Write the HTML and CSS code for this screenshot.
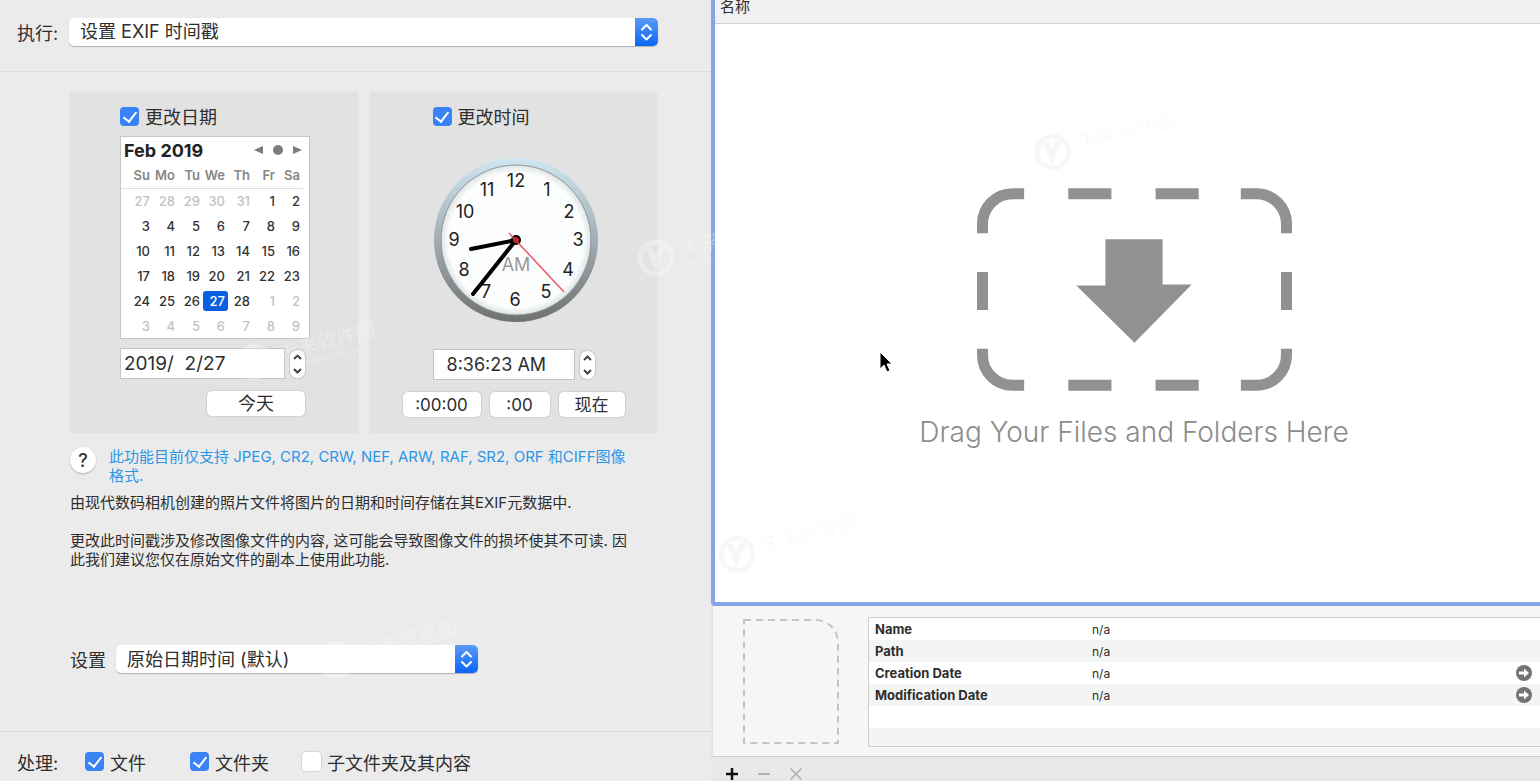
FILE: index.html
```html
<!DOCTYPE html>
<html lang="zh-CN">
<head>
  <meta charset="UTF-8">
  <meta name="viewport" content="width=device-width, initial-scale=1">
  <title>设置 EXIF 时间戳</title>
  <link rel="stylesheet" href="styles.css">
</head>
<body>
  <div class="container">
    <div class="settings">
      <div class="action-bar">
        <label for="action">执行:</label>
        <div class="select-box">
          <select id="action"><option>设置 EXIF 时间戳</option></select>
          <svg class="select-arrows" viewBox="0 0 23 28"><path d="M7 11.500l4.500-4.500 4.500 4.500M7 17l4.500 4.500 4.500-4.500"/></svg>
        </div>
      </div>

      <div class="settings-body">
        <div class="panels">
          <div class="panel date-panel">
            <label class="check"><input type="checkbox" checked>更改日期</label>
            <div class="calendar">
              <div class="calendar-head">
                <span class="month">Feb 2019</span>
                <button aria-label="Previous month"><svg width="9" height="10"><path d="M9 1v8L0 5z"/></svg></button>
                <button aria-label="Current month"><svg width="10" height="10"><circle cx="5" cy="5" r="5"/></svg></button>
                <button aria-label="Next month"><svg width="9" height="10"><path d="M0 1v8l9-4z"/></svg></button>
              </div>
              <table>
                <thead>
                  <tr><th>Su</th><th>Mo</th><th>Tu</th><th>We</th><th>Th</th><th>Fr</th><th>Sa</th></tr>
                </thead>
                <tbody>
                  <tr><td class="other">27</td><td class="other">28</td><td class="other">29</td><td class="other">30</td><td class="other">31</td><td>1</td><td>2</td></tr>
                  <tr><td>3</td><td>4</td><td>5</td><td>6</td><td>7</td><td>8</td><td>9</td></tr>
                  <tr><td>10</td><td>11</td><td>12</td><td>13</td><td>14</td><td>15</td><td>16</td></tr>
                  <tr><td>17</td><td>18</td><td>19</td><td>20</td><td>21</td><td>22</td><td>23</td></tr>
                  <tr><td>24</td><td>25</td><td>26</td><td class="selected"><span>27</span></td><td>28</td><td class="other">1</td><td class="other">2</td></tr>
                  <tr><td class="other">3</td><td class="other">4</td><td class="other">5</td><td class="other">6</td><td class="other">7</td><td class="other">8</td><td class="other">9</td></tr>
                </tbody>
              </table>
            </div>
            <div class="field">
              <input type="text" class="date-input" aria-label="日期" value="2019/  2/27">
              <div class="stepper">
                <button aria-label="Up"><svg width="9" height="6"><path d="M1 5l3.500-3.500L8 5"/></svg></button>
                <button aria-label="Down"><svg width="9" height="6"><path d="M1 1l3.500 3.500L8 1"/></svg></button>
              </div>
            </div>
            <div class="buttons">
              <button class="btn today">今天</button>
            </div>
          </div>

          <div class="panel time-panel">
            <label class="check"><input type="checkbox" checked>更改时间</label>
            <svg class="clock" viewBox="0 0 166 166">
              <defs>
                <linearGradient id="rim" x1="0" y1="0" x2="0" y2="1">
                  <stop offset="0" stop-color="#cfe6f0"/>
                  <stop offset=".5" stop-color="#a3aeb3"/>
                  <stop offset="1" stop-color="#707070"/>
                </linearGradient>
                <radialGradient id="face">
                  <stop offset=".9" stop-color="#fcfdfd"/>
                  <stop offset="1" stop-color="#dfe3e5"/>
                </radialGradient>
              </defs>
              <circle cx="83" cy="83" r="82" fill="url(#rim)"/>
              <circle cx="83" cy="83" r="75" fill="url(#face)" stroke="#8d9699"/>
              <g class="digits">
                <text x="83" y="30">12</text>
                <text x="114" y="39">1</text>
                <text x="136" y="61">2</text>
                <text x="145" y="89">3</text>
                <text x="135" y="119">4</text>
                <text x="113" y="141">5</text>
                <text x="82" y="149">6</text>
                <text x="53" y="141">7</text>
                <text x="31" y="119">8</text>
                <text x="21" y="89">9</text>
                <text x="32" y="61">10</text>
                <text x="54" y="39">11</text>
                <text x="83" y="114" class="ampm">AM</text>
              </g>
              <path class="hand" d="M83 83L38 92M83 83L40 137"/>
              <circle cx="83" cy="83" r="5"/>
              <path d="M76 76l55 59" stroke="#ee5560" stroke-width="1.500"/>
              <circle cx="83" cy="83" r="3" fill="#c3252f"/>
            </svg>
            <div class="field">
              <input type="text" class="time-input" aria-label="时间" value="8:36:23 AM">
              <div class="stepper">
                <button aria-label="Up"><svg width="9" height="6"><path d="M1 5l3.500-3.500L8 5"/></svg></button>
                <button aria-label="Down"><svg width="9" height="6"><path d="M1 1l3.500 3.500L8 1"/></svg></button>
              </div>
            </div>
            <div class="buttons">
              <button class="btn hour">:00:00</button>
              <button class="btn minute">:00</button>
              <button class="btn now">现在</button>
            </div>
          </div>
        </div>

        <div class="help">
          <button class="help-button">?</button>
          <p>此功能目前仅支持 JPEG, CR2, CRW, NEF, ARW, RAF, SR2, ORF 和CIFF图像<br>格式.</p>
        </div>
        <p class="note">由现代数码相机创建的照片文件将图片的日期和时间存储在其EXIF元数据中.</p>
        <p class="note">更改此时间戳涉及修改图像文件的内容, 这可能会导致图像文件的损坏使其不可读. 因<br>此我们建议您仅在原始文件的副本上使用此功能.</p>

        <div class="target">
          <label for="target">设置</label>
          <div class="select-box">
            <select id="target"><option>原始日期时间 (默认)</option></select>
            <svg class="select-arrows" viewBox="0 0 23 28"><path d="M7 11.500l4.500-4.500 4.500 4.500M7 17l4.500 4.500 4.500-4.500"/></svg>
          </div>
        </div>
      </div>

      <div class="process-bar">
        <span>处理:</span>
        <label class="check"><input type="checkbox" checked>文件</label>
        <label class="check"><input type="checkbox" checked>文件夹</label>
        <label class="check"><input type="checkbox">子文件夹及其内容</label>
      </div>
    </div>

    <div class="files">
      <div class="file-list">
        <div class="list-header">名称</div>
        <div class="drop-area">
          <svg class="drop-icon" viewBox="0 0 314 202">
            <g fill="none" stroke="#919191" stroke-width="11">
              <path d="M5.500 45V35.500A30 30 0 0 1 35.500 5.500H47M263 5.500h15.500a30 30 0 0 1 30 30V45M5.500 160v6.500a30 30 0 0 0 30 30H47M263 196.500h15.500a30 30 0 0 0 30-30V160"/>
              <path d="M91 5.500h43M178 5.500h43M91 196.500h43M178 196.500h43M5.500 83.500v38M308.500 83.500v38"/>
            </g>
            <path fill="#919191" d="M128 51h57v45h29l-57 58-58-57h29z"/>
          </svg>
          <p>Drag Your Files and Folders Here</p>
        </div>
      </div>

      <div class="info">
        <svg class="thumb" viewBox="0 0 96 125"><path d="M1 1h74q20 4 20 24v99H1z"/></svg>
        <table class="info-table">
          <tr><th>Name</th><td>n/a</td><td></td></tr>
          <tr><th>Path</th><td>n/a</td><td></td></tr>
          <tr>
            <th>Creation Date</th><td>n/a</td>
            <td><button aria-label="Use creation date"><svg viewBox="0 0 16 16"><circle cx="8" cy="8" r="8"/><path d="M3 6.500h5V3.500L13 8l-5 4.500v-3H3z"/></svg></button></td>
          </tr>
          <tr>
            <th>Modification Date</th><td>n/a</td>
            <td><button aria-label="Use modification date"><svg viewBox="0 0 16 16"><circle cx="8" cy="8" r="8"/><path d="M3 6.500h5V3.500L13 8l-5 4.500v-3H3z"/></svg></button></td>
          </tr>
          <tr><td></td><td></td><td></td></tr>
          <tr class="last"><td></td><td></td><td></td></tr>
        </table>
      </div>

      <div class="list-actions">
        <button aria-label="Add"><svg width="12" height="12"><path d="M6 0v12M0 6h12" stroke="#111" stroke-width="2.500"/></svg></button>
        <button aria-label="Remove" disabled><svg width="12" height="12"><path d="M0 6h12" stroke="#b0b0b0" stroke-width="2"/></svg></button>
        <button aria-label="Clear" disabled><svg width="12" height="12"><path d="M0.500 0.500l11 11M11.500 0.500l-11 11" stroke="#a8a8a8" stroke-width="1.300"/></svg></button>
      </div>
    </div>
  </div>

  <svg class="cursor" viewBox="0 0 14 22"><path d="M1 1v17l4-4 3 7 3-1.500-3-6.500h5z"/></svg>

  <!-- watermarks -->
  <svg class="mark m1"><use href="#mark"/></svg>
  <svg class="mark m2"><use href="#mark"/></svg>
  <svg class="mark dark m3"><use href="#mark"/></svg>
  <svg class="mark dark m4"><use href="#mark"/></svg>
  <svg class="mark m5"><use href="#mark"/></svg>
  <svg width="0" height="0" class="defs">
    <defs>
      <g id="mark">
        <circle cx="22" cy="50" r="16" fill="none" stroke="currentColor" stroke-width="5"/>
        <path d="M15 40l6 16 7-17" fill="none" stroke="currentColor" stroke-width="6"/>
        <g transform="rotate(-14 48 48)" fill="currentColor">
          <text x="48" y="48" font-size="20">未来软件园</text>
          <text x="52" y="60" font-size="10">www.orsoon.com</text>
        </g>
      </g>
    </defs>
  </svg>
</body>
</html>
```

FILE: styles.css
```css
* {
  box-sizing: border-box;
}

html, body {
  height: 100%;
  margin: 0;
  padding: 0;
}

body {
  font-family: Inter, "Noto Sans CJK SC", sans-serif;
  font-size: 18px;
  color: #2e2e2e;
  background-color: #ebebeb;
  position: relative;
  overflow: hidden;
}

button, input, select {
  font: inherit;
  color: inherit;
  margin: 0;
}

button {
  border: none;
  padding: 0;
  background: none;
}

p {
  margin: 0;
}

.container {
  display: flex;
  min-height: 100%;
}

/* left side */

.settings {
  flex: 0 0 711px;
  display: flex;
  flex-direction: column;
}

.action-bar {
  display: flex;
  align-items: center;
  height: 72px;
  padding: 0 53px 8px 17px;
  border-bottom: 1px solid #dcdcdc;
}

.action-bar label {
  width: 52px;
}

.select-box {
  flex: 1;
  height: 28px;
  position: relative;
}

.select-box select {
  display: block;
  width: 100%;
  height: 28px;
  padding: 0 30px 0 11px;
  appearance: none;
  border: none;
  border-radius: 5px;
  background-color: #fff;
  box-shadow: 0 1px 1px rgba(0, 0, 0, 0.25);
}

.select-arrows {
  position: absolute;
  top: 0;
  right: 0;
  width: 23px;
  height: 28px;
  border-radius: 0 5px 5px 0;
  background: linear-gradient(#5b9bf8, #0a66f5);
  fill: none;
  stroke: #fff;
  stroke-width: 2;
  stroke-linecap: round;
  stroke-linejoin: round;
  pointer-events: none;
}

.settings-body {
  flex: 1;
  padding: 20px 54px 0 70px;
}

.panels {
  display: grid;
  grid-template-columns: 1fr 1fr;
  gap: 12px;
}

.panel {
  min-height: 341px;
  padding-top: 14px;
  border-radius: 3px;
  background-color: #e2e2e2;
  box-shadow: 0 0 0 1px #e6e6e6;
}

.date-panel {
  padding-left: 50px;
}

.time-panel {
  padding-left: 33px;
}

.check {
  display: flex;
  align-items: center;
  height: 20px;
}

.check input {
  appearance: none;
  display: flex;
  justify-content: center;
  width: 19px;
  height: 19px;
  margin-right: 6px;
  border-radius: 4px;
  background-color: #fff;
  box-shadow: 0 0 1px 1px rgba(0, 0, 0, 0.1);
}

.check input:checked {
  background-color: #3983f7;
  box-shadow: none;
}

.check input:checked::after {
  content: "";
  width: 6px;
  height: 11px;
  margin-top: 2px;
  border: solid #fff;
  border-width: 0 2px 2px 0;
  transform: rotate(38deg);
}

.calendar {
  width: 190px;
  height: 203px;
  margin-top: 10px;
  border: 1px solid #c6c6c6;
  background-color: #fff;
}

.calendar-head {
  display: flex;
  align-items: center;
  gap: 10px;
  height: 26px;
  padding: 0 7px 0 3px;
}

.calendar-head .month {
  flex: 1;
  font-weight: 700;
  color: #222;
}

.calendar-head button {
  display: flex;
  fill: #7c7c7c;
}

.calendar table {
  table-layout: fixed;
  width: 182px;
  border-collapse: collapse;
  font-size: 13px;
}

.calendar th, .calendar td {
  padding: 0 3px 0 0;
  height: 25px;
  line-height: 20px;
  text-align: right;
  font-weight: 500;
  color: #333;
}

.calendar th:first-child, .calendar td:first-child {
  width: 32px;
}

.calendar thead tr {
  border-bottom: 1px solid #dedede;
}

.calendar th {
  font-weight: 600;
  color: #868686;
}

.calendar td.other {
  color: #c2c2c2;
}

.calendar td.selected {
  padding: 0;
}

.calendar td.selected span {
  display: block;
  padding-right: 3px;
  border-radius: 3px;
  background-color: #0a60e0;
  color: #fff;
}

.field {
  display: flex;
  align-items: center;
  gap: 5px;
  margin-top: 9px;
}

.field input {
  height: 31px;
  padding: 0 3px;
  border: 1px solid #c4c4c4;
  background-color: #fff;
  white-space: pre;
}

.field .date-input {
  width: 165px;
  font-size: 19px;
}

.field .time-input {
  width: 142px;
  padding-left: 13px;
}

.stepper {
  display: flex;
  flex-direction: column;
  width: 15px;
  height: 28px;
  border-radius: 7px;
  background-color: #fff;
  box-shadow: 0 0 1px 1px rgba(0, 0, 0, 0.12);
}

.stepper button {
  flex: 1;
  display: flex;
  align-items: center;
  justify-content: center;
}

.stepper svg {
  fill: none;
  stroke: #444;
  stroke-width: 2;
}

.buttons {
  display: flex;
  gap: 9px;
  margin-top: 12px;
}

.btn {
  height: 25px;
  border-radius: 5px;
  background-color: #fff;
  box-shadow: 0 0 1px 1px rgba(0, 0, 0, 0.08);
  line-height: 24px;
}

.today {
  width: 98px;
  margin-left: 87px;
}

.hour {
  width: 78px;
}

.minute {
  width: 60px;
}

.now {
  width: 66px;
}

.time-panel .btn {
  font-size: 17px;
}

.time-panel .check, .time-panel .field, .clock {
  margin-left: 30px;
}

.clock {
  display: block;
  width: 166px;
  height: 166px;
  margin-top: 31px;
}

.time-panel .field {
  margin-top: 26px;
}

.digits {
  font-size: 18px;
  text-anchor: middle;
  fill: #222;
}

.digits .ampm {
  fill: #999;
}

.hand {
  fill: none;
  stroke: #000;
  stroke-width: 4;
  stroke-linecap: round;
}

.help {
  display: flex;
  margin-top: 14px;
  font-size: 15px;
  line-height: 19px;
  color: #2b96e8;
  white-space: nowrap;
}

.help-button {
  width: 26px;
  height: 26px;
  margin-right: 13px;
  border-radius: 50%;
  background-color: #fff;
  box-shadow: 0 1px 2px rgba(0, 0, 0, 0.25);
  font-size: 18px;
  font-weight: 500;
  color: #333;
}

.note {
  margin-top: 8px;
  font-size: 15px;
  line-height: 19px;
  white-space: nowrap;
}

.note + .note {
  margin-top: 19px;
}

.target {
  display: flex;
  align-items: center;
  width: 408px;
  margin-top: 76px;
}

.target label {
  width: 46px;
}

.process-bar {
  display: flex;
  align-items: center;
  height: 50px;
  padding: 10px 0 0 17px;
  border-top: 1px solid #d8d8d8;
}

.process-bar span {
  width: 68px;
}

.process-bar .check {
  margin-right: 44px;
}

.process-bar .check + .check {
  margin-right: 33px;
}

/* right side */

.files {
  flex: 1;
  display: flex;
  flex-direction: column;
}

.file-list {
  flex: 1;
  display: flex;
  flex-direction: column;
  border: solid #86a5e8;
  border-width: 0 0 4px 4px;
  border-radius: 0 0 0 4px;
  background-color: #fff;
}

.list-header {
  height: 24px;
  padding-left: 5px;
  border-bottom: 1px solid #cfcfcf;
  background-color: #f1f1f1;
  font-size: 15px;
  line-height: 14px;
}

.drop-area {
  flex: 1;
  display: flex;
  flex-direction: column;
  align-items: center;
  justify-content: center;
  padding: 12px 0 0 13px;
  color: #8c8c8c;
}

.drop-icon {
  width: 315px;
  height: 203px;
}

.drop-area p {
  margin-top: 22px;
  font-size: 28px;
  font-weight: 300;
  line-height: 38px;
}

.info {
  display: flex;
  height: 150px;
  padding: 11px 0 0 30px;
  border-left: 2px solid #e6e6e6;
  background-color: #f6f6f6;
}

.thumb {
  width: 96px;
  height: 125px;
  margin: 2px 29px 0 0;
  fill: none;
  stroke: #c4c4c4;
  stroke-width: 2;
  stroke-dasharray: 7 5;
}

.info-table {
  flex: 1;
  height: 130px;
  border: 1px solid #c9cfc9;
  border-right: none;
  border-spacing: 0;
  background-color: #fff;
  font-size: 12px;
}

.info-table tr {
  height: 22px;
}

.info-table tr.last {
  height: 18px;
}

.info-table tr:nth-child(even) {
  background-color: #f3f5f4;
}

.info-table th, .info-table td {
  padding: 0;
}

.info-table th {
  width: 223px;
  padding-left: 6px;
  text-align: left;
  font-size: 13px;
  font-weight: 700;
}

.info-table td:last-child {
  width: 24px;
}

.info-table button {
  display: block;
}

.info-table svg {
  display: block;
  width: 16px;
  height: 16px;
  fill: #737373;
}

.info-table svg path {
  fill: #fff;
}

.list-actions {
  display: flex;
  align-items: center;
  gap: 20px;
  height: 25px;
  padding: 10px 0 0 15px;
  border-top: 1px solid #cecece;
  background-color: #e9e9e9;
}

.list-actions button {
  display: flex;
}

.cursor {
  position: absolute;
  top: 351px;
  left: 879px;
  width: 14px;
  height: 22px;
  stroke: #fff;
  stroke-width: 1;
}

.mark {
  position: absolute;
  width: 165px;
  height: 75px;
  color: rgba(255, 255, 255, 0.3);
  pointer-events: none;
}

.mark.dark {
  color: rgba(0, 0, 0, 0.03);
}

.m1 {
  top: 208px;
  left: 634px;
}

.m2 {
  top: 610px;
  left: 314px;
}

.m3 {
  top: 102px;
  left: 1031px;
}

.m4 {
  top: 504px;
  left: 715px;
}

.m5 {
  top: 312px;
  left: 232px;
}

.defs {
  position: absolute;
}
```
